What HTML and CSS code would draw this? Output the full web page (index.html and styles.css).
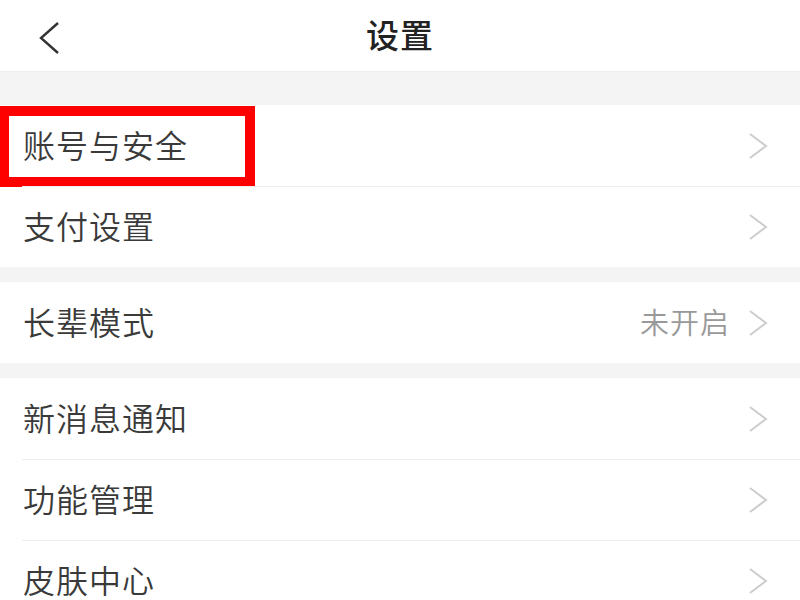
FILE: index.html
```html
<!DOCTYPE html>
<html lang="zh-CN">
<head>
  <meta charset="UTF-8">
  <title>设置</title>
  <link rel="stylesheet" href="styles.css">
</head>
<body>
<div class="page">
  <div class="header">
    <span class="back">
      <svg width="24" height="34" viewBox="0 0 24 34"><path d="M21 2 L4 17 L21 32" fill="none" stroke="#333" stroke-width="2.4"/></svg>
    </span>
    <h1 class="title">设置</h1>
  </div>

  <div class="group">
    <div class="row">
      <span class="label">账号与安全</span>
      <svg class="arrow" width="20" height="28" viewBox="0 0 20 28"><path d="M2 2 L18 14 L2 26" fill="none" stroke="#ccc" stroke-width="2"/></svg>
      <div class="mark"></div>
    </div>
    <div class="row">
      <span class="label">支付设置</span>
      <svg class="arrow" width="20" height="28" viewBox="0 0 20 28"><path d="M2 2 L18 14 L2 26" fill="none" stroke="#ccc" stroke-width="2"/></svg>
    </div>
  </div>

  <div class="group">
    <div class="row">
      <span class="label">长辈模式</span>
      <span class="value">未开启</span>
      <svg class="arrow" width="20" height="28" viewBox="0 0 20 28"><path d="M2 2 L18 14 L2 26" fill="none" stroke="#ccc" stroke-width="2"/></svg>
    </div>
  </div>

  <div class="group">
    <div class="row">
      <span class="label">新消息通知</span>
      <svg class="arrow" width="20" height="28" viewBox="0 0 20 28"><path d="M2 2 L18 14 L2 26" fill="none" stroke="#ccc" stroke-width="2"/></svg>
    </div>
    <div class="row">
      <span class="label">功能管理</span>
      <svg class="arrow" width="20" height="28" viewBox="0 0 20 28"><path d="M2 2 L18 14 L2 26" fill="none" stroke="#ccc" stroke-width="2"/></svg>
    </div>
    <div class="row">
      <span class="label">皮肤中心</span>
      <svg class="arrow" width="20" height="28" viewBox="0 0 20 28"><path d="M2 2 L18 14 L2 26" fill="none" stroke="#ccc" stroke-width="2"/></svg>
    </div>
  </div>
</div>
</body>
</html>
```

FILE: styles.css
```css
* {
  margin: 0;
  padding: 0;
  box-sizing: border-box;
}

body {
  background-color: #f4f4f4;
  font-family: "Noto Sans CJK SC", "Noto Sans", sans-serif;
  color: #333;
  overflow: hidden;
}

.header {
  height: 72px;
  background-color: #fff;
  border-bottom: 1px solid #eee;
  display: flex;
  align-items: center;
  justify-content: center;
  position: relative;
  margin-bottom: 33px;
}

.back {
  position: absolute;
  left: 37px;
  top: 21px;
  display: flex;
}

.title {
  font-size: 33px;
  font-weight: 500;
  color: #222;
  letter-spacing: 1px;
  margin-top: -3px;
}

.group {
  background-color: #fff;
  margin-bottom: 15px;
}

.row {
  height: 81px;
  display: flex;
  align-items: center;
  padding: 0 32px 0 23px;
  position: relative;
}

.row + .row::before {
  content: "";
  position: absolute;
  top: 0;
  left: 22px;
  right: 0;
  border-top: 1px solid #eee;
}

.label {
  flex: 1;
  font-size: 32px;
  font-weight: 350;
  letter-spacing: 1px;
  color: #3a3a3a;
  margin-top: -4px;
}

.value {
  font-size: 29px;
  font-weight: 350;
  color: #999;
  letter-spacing: 1px;
  margin-right: 18px;
  margin-top: -4px;
}

.arrow {
  display: block;
}

.mark {
  position: absolute;
  left: 0;
  top: 1px;
  width: 255px;
  height: 81px;
  border: 10px solid #ff0000;
  border-left-width: 9px;
}
```
